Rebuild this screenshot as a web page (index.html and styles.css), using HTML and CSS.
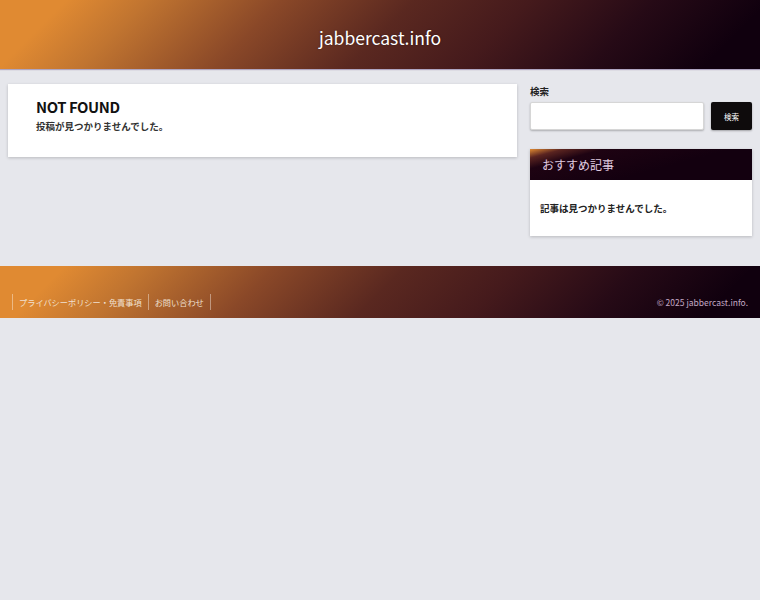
FILE: index.html
```html
<!DOCTYPE html>
<html lang="ja">
<head>
<meta charset="utf-8">
<title>jabbercast.info</title>
<link rel="stylesheet" href="styles.css">
</head>
<body>
<header class="site-header">
  <div class="site-name">jabbercast.info</div>
</header>
<div class="content">
  <main class="main">
    <h1 class="nf-title">NOT FOUND</h1>
    <p class="nf-text">投稿が見つかりませんでした。</p>
  </main>
  <aside class="sidebar">
    <div class="search-widget">
      <div class="search-label">検索</div>
      <div class="search-row">
        <div class="search-input"></div>
        <div class="search-btn">検索</div>
      </div>
    </div>
    <div class="widget">
      <div class="widget-title">おすすめ記事</div>
      <div class="widget-body">記事は見つかりませんでした。</div>
    </div>
  </aside>
</div>
<footer class="site-footer">
  <nav class="footer-nav">
    <span class="fn-item">プライバシーポリシー・免責事項</span>
    <span class="fn-item">お問い合わせ</span>
  </nav>
  <div class="copyright">© 2025 jabbercast.info.</div>
</footer>
</body>
</html>
```
FILE: styles.css
```css
html, body {
  margin: 0;
  padding: 0;
}
body {
  background: #e6e7ec;
  font-family: "Noto Sans CJK JP", "Noto Sans", sans-serif;
  color: #222;
}
.site-header {
  height: 69px;
  background: linear-gradient(135deg, #e08a32 8%, #c07430 18%, #8a4828 34%, #5a2820 50%, #451a1c 64%, #260a16 79%, #10000e 93%);
  display: flex;
  align-items: center;
  justify-content: center;
  box-shadow: 0 1px 1px rgba(120, 100, 150, 0.5);
}
.site-name {
  color: #fff;
  font-size: 17.5px;
  margin-top: 5px;
  text-shadow: 0 0 2px rgba(0, 0, 0, 0.4);
}
.content {
  display: flex;
  gap: 13px;
  padding: 15px 8px 30px 8px;
  align-items: flex-start;
}
.main {
  width: 509px;
  height: 73px;
  box-sizing: border-box;
  background: #fff;
  padding: 13px 28px;
  box-shadow: 0 1px 3px rgba(0, 0, 0, 0.2);
}
.nf-title {
  margin: 0;
  font-size: 14.8px;
  font-weight: 700;
  line-height: 20px;
  color: #111;
  letter-spacing: -0.4px;
}
.nf-text {
  margin: 2px 0 0 0;
  font-size: 9.5px;
  font-weight: 700;
  line-height: 14px;
  color: #333;
}
.sidebar {
  width: 222px;
  display: flex;
  flex-direction: column;
  gap: 19px;
}
.search-widget {
  display: flex;
  flex-direction: column;
  gap: 3px;
}
.search-label {
  font-size: 9.5px;
  font-weight: 700;
  line-height: 15px;
  color: #222;
}
.search-row {
  display: flex;
  gap: 7px;
}
.search-input {
  flex: 1;
  height: 28px;
  box-sizing: border-box;
  background: #fff;
  border: 1px solid #d6d6d6;
  border-radius: 2px;
  box-shadow: 0 1px 2px rgba(0, 0, 0, 0.25);
}
.search-btn {
  width: 41px;
  height: 28px;
  background: #0e0b0c;
  color: #fff;
  font-size: 7.5px;
  display: flex;
  align-items: center;
  justify-content: center;
  border-radius: 2px;
  box-shadow: 0 1px 2px rgba(0, 0, 0, 0.3);
}
.widget {
  background: #fff;
  box-shadow: 0 1px 3px rgba(0, 0, 0, 0.2);
}
.widget-title {
  height: 31px;
  display: flex;
  align-items: center;
  padding-left: 12px;
  color: #e0cce0;
  font-size: 12px;
  background: linear-gradient(165deg, #e08a32 0%, #5a2420 10%, #1e0312 22%, #13000f 60%);
}
.widget-body {
  height: 56px;
  display: flex;
  align-items: center;
  padding-left: 10px;
  font-size: 9.5px;
  font-weight: 700;
  color: #222;
}
.site-footer {
  height: 52px;
  box-sizing: border-box;
  background: linear-gradient(135deg, #e08a32 8%, #c07430 18%, #8a4828 34%, #5a2820 50%, #451a1c 64%, #260a16 79%, #10000e 93%);
  display: flex;
  justify-content: space-between;
  align-items: flex-end;
  padding: 0 12px 8px 12px;
}
.footer-nav {
  display: flex;
  border-left: 1px solid rgba(255, 255, 255, 0.4);
}
.fn-item {
  color: #f0e0d0;
  font-size: 8.2px;
  line-height: 16px;
  padding: 0 6px;
  border-right: 1px solid rgba(255, 255, 255, 0.4);
}
.copyright {
  color: #c4a8c4;
  font-size: 8.5px;
  line-height: 16px;
}
```
